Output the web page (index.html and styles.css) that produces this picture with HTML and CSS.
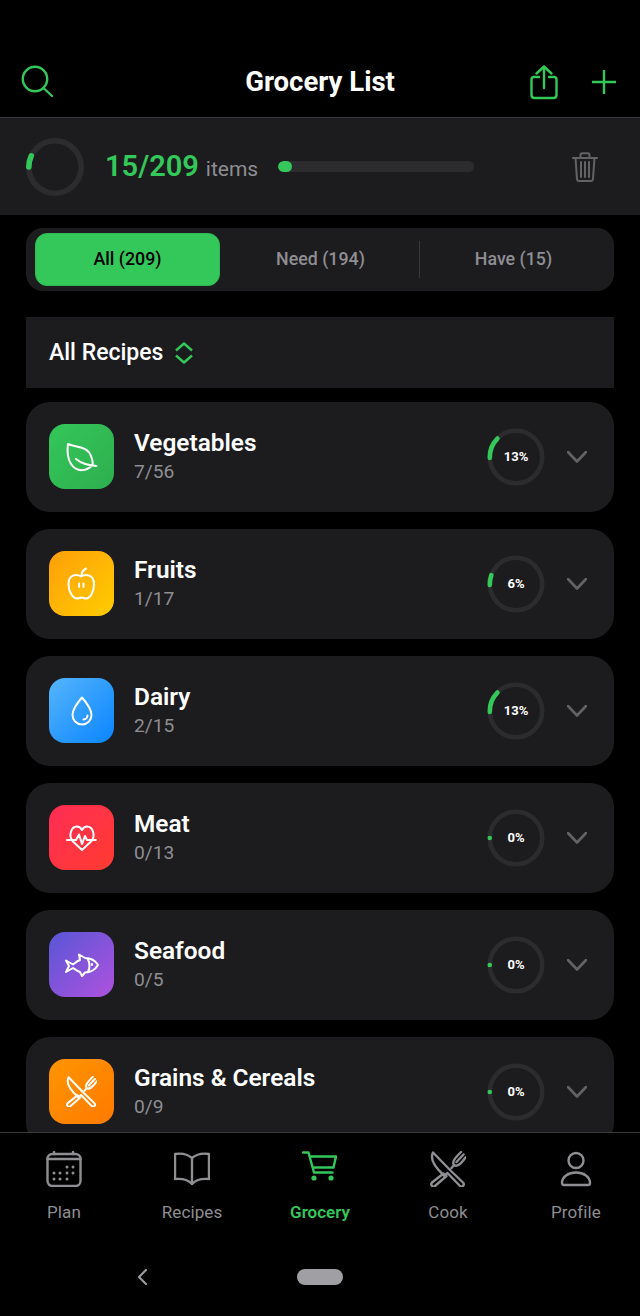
FILE: index.html
```html
<!DOCTYPE html>
<html lang="en">
<head>
<meta charset="utf-8">
<title>Grocery List</title>
<link rel="stylesheet" href="styles.css">
</head>
<body>
<div class="app">
  <header class="topbar">
    <button class="icon-btn search-btn" aria-label="Search">
      <svg class="ico-36 stroke-green" viewBox="0 0 36 36"><circle cx="15" cy="15" r="12.2"/><path d="M23.5 24 L32 32"/></svg>
    </button>
    <h1 class="title">Grocery List</h1>
    <div class="top-actions">
      <svg class="ico-36 stroke-green" viewBox="0 0 36 36"><path d="M11 13 H6 Q3.5 13 3.5 15.5 V31 Q3.5 34 6.5 34 H25.5 Q28.5 34 28.5 31 V15.5 Q28.5 13 26 13 H21"/><path d="M16 24 V2.5 M8.5 9.5 L16 2.5 L23.5 9.5"/></svg>
      <svg class="ico-24 stroke-green" viewBox="0 0 24 24"><path d="M12 .5 V23.5 M.5 12 H23.5"/></svg>
    </div>
  </header>

  <section class="summary">
    <svg class="ring-large" viewBox="0 0 58 58"><circle class="ring-track" cx="29" cy="29" r="26.2"/><circle class="ring-value" cx="29" cy="29" r="26.2" pathLength="100" stroke-dasharray="7 100" transform="rotate(180 29 29)"/></svg>
    <div class="count"><span class="count-num">15/209</span> <span class="count-label">items</span></div>
    <div class="bar"><div class="bar-fill" style="width:7%"></div></div>
    <svg class="trash" viewBox="0 0 26 30"><path d="M1 6 H25 M3.5 6 L5 27 Q5.2 29 7 29 H19 Q20.8 29 21 27 L22.5 6 M8.5 6 V3 Q8.5 1.2 10.3 1.2 H15.7 Q17.5 1.2 17.5 3 V6 M9 10 V25 M13 10 V25 M17 10 V25"/></svg>
  </section>

  <main class="content">
    <nav class="tabs">
      <div class="tab tab-active">All (209)</div>
      <div class="tab tab-divided">Need (194)</div>
      <div class="tab">Have (15)</div>
    </nav>

    <div class="filter">
      <span>All Recipes</span>
      <svg class="sort" viewBox="0 0 18 22"><path d="M1 8.5 L9 1.5 L17 8.5 M1 13.5 L9 20.5 L17 13.5"/></svg>
    </div>

    <ul class="cards">
      <li class="card">
        <div class="cat cat-green"><svg viewBox="0 0 65 65"><path d="M19 20 C28 24 38 22 42 32 C43.5 36 44 39 43.5 41 C38 47 28 49 22 40 C19 35 18 27 19 20 Z M27 35 C33 40 39 41 47.5 42"/></svg></div>
        <div class="info"><div class="name">Vegetables</div><div class="sub">7/56</div></div>
        <div class="ring"><svg viewBox="0 0 58 58"><circle class="ring-track" cx="29" cy="29" r="26.2"/><circle class="ring-value" cx="29" cy="29" r="26.2" pathLength="100" stroke-dasharray="13 100" transform="rotate(178 29 29)"/></svg><span>13%</span></div>
        <svg class="chev" viewBox="0 0 20 12"><path d="M1 1 L10 10.5 L19 1"/></svg>
      </li>
      <li class="card">
        <div class="cat cat-orange"><svg viewBox="0 0 65 65"><path d="M32 25.500 C27 22.500 19.500 23.500 19.500 33 C19.500 41 24 47.500 28 47.500 C30 47.500 31 46.500 32.500 46.500 C34 46.500 35 47.500 37 47.500 C41 47.500 45 41 45 33 C45 23.500 37 22.500 32 25.500 Z M32.500 25 C32.500 22 34 19 37 17.500 M30 32.500 V36 M34.500 32.500 V36"/></svg></div>
        <div class="info"><div class="name">Fruits</div><div class="sub">1/17</div></div>
        <div class="ring"><svg viewBox="0 0 58 58"><circle class="ring-track" cx="29" cy="29" r="26.2"/><circle class="ring-value" cx="29" cy="29" r="26.2" pathLength="100" stroke-dasharray="6 100" transform="rotate(178 29 29)"/></svg><span>6%</span></div>
        <svg class="chev" viewBox="0 0 20 12"><path d="M1 1 L10 10.5 L19 1"/></svg>
      </li>
      <li class="card">
        <div class="cat cat-blue"><svg viewBox="0 0 65 65"><path d="M33 19.500 C33 19.500 23.500 30.500 23.500 37 A9.500 9.500 0 0 0 42.500 37 C42.500 30.500 33 19.500 33 19.500 Z M38.500 37.500 A4.500 4.500 0 0 1 34.500 41.500"/></svg></div>
        <div class="info"><div class="name">Dairy</div><div class="sub">2/15</div></div>
        <div class="ring"><svg viewBox="0 0 58 58"><circle class="ring-track" cx="29" cy="29" r="26.2"/><circle class="ring-value" cx="29" cy="29" r="26.2" pathLength="100" stroke-dasharray="13 100" transform="rotate(178 29 29)"/></svg><span>13%</span></div>
        <svg class="chev" viewBox="0 0 20 12"><path d="M1 1 L10 10.5 L19 1"/></svg>
      </li>
      <li class="card">
        <div class="cat cat-red"><svg viewBox="0 0 65 65"><path d="M33 45 L24 36.500 C19 31 22 21.500 28 21.500 C30.500 21.500 32 23 33 25 C34 23 35.500 21.500 38 21.500 C44 21.500 47 31 42 36.500 Z M18 35 H27 L30 29.500 L33 39 L36 31 L38 35 H47"/></svg></div>
        <div class="info"><div class="name">Meat</div><div class="sub">0/13</div></div>
        <div class="ring"><svg viewBox="0 0 58 58"><circle class="ring-track" cx="29" cy="29" r="26.2"/><circle class="ring-value" cx="29" cy="29" r="26.2" pathLength="100" stroke-dasharray="0 100" transform="rotate(180 29 29)"/></svg><span>0%</span></div>
        <svg class="chev" viewBox="0 0 20 12"><path d="M1 1 L10 10.5 L19 1"/></svg>
      </li>
      <li class="card">
        <div class="cat cat-purple"><svg viewBox="0 0 65 65"><path d="M49 33 C46 28 42 26 36 26 L30 22.500 L31 28 C28 29 26 31 24 32.500 L17 28.500 L20 34 L17 40 L24 36 C27 38 29 39.500 31 40 L33 44 L36 40.500 C42 40.500 46 38 49 33 Z M38.500 26.500 C41 31 41 36 39 40 M43 32 V33"/></svg></div>
        <div class="info"><div class="name">Seafood</div><div class="sub">0/5</div></div>
        <div class="ring"><svg viewBox="0 0 58 58"><circle class="ring-track" cx="29" cy="29" r="26.2"/><circle class="ring-value" cx="29" cy="29" r="26.2" pathLength="100" stroke-dasharray="0 100" transform="rotate(180 29 29)"/></svg><span>0%</span></div>
        <svg class="chev" viewBox="0 0 20 12"><path d="M1 1 L10 10.5 L19 1"/></svg>
      </li>
      <li class="card">
        <div class="cat cat-amber"><svg class="cat-cross" viewBox="0 0 36 36"><path d="M3 1.500 L21 20 L33 31.500 C35 34 32.500 36.500 30 35 L17.500 22 L14 24.500 C8 19 -1 9 3 1.500 Z M13.500 22.500 L2 31.500 C0 34 3 37 5 35 L16.500 25 M21.500 17 L24 14 C22 11 24 8 31 1 M26.500 11 L33.500 3.500 M24 14 C27 16 30 14 36 6"/></svg></div>
        <div class="info"><div class="name">Grains &amp; Cereals</div><div class="sub">0/9</div></div>
        <div class="ring"><svg viewBox="0 0 58 58"><circle class="ring-track" cx="29" cy="29" r="26.2"/><circle class="ring-value" cx="29" cy="29" r="26.2" pathLength="100" stroke-dasharray="0 100" transform="rotate(180 29 29)"/></svg><span>0%</span></div>
        <svg class="chev" viewBox="0 0 20 12"><path d="M1 1 L10 10.5 L19 1"/></svg>
      </li>
    </ul>
  </main>

  <footer class="tabbar">
    <nav class="nav">
      <div class="nav-item">
        <svg class="ico-36 stroke-gray" viewBox="0 0 36 36"><rect x="1.500" y="3" width="33" height="32" rx="5"/><path d="M1.500 8 H34.500 M8 1 V3 M27 1 V3"/><g class="dots"><circle cx="21" cy="16" r="1.500"/><circle cx="27" cy="16" r="1.500"/><circle cx="8" cy="22" r="1.500"/><circle cx="14" cy="22" r="1.500"/><circle cx="21" cy="22" r="1.500"/><circle cx="27" cy="22" r="1.500"/><circle cx="8" cy="28" r="1.500"/><circle cx="14" cy="28" r="1.500"/><circle cx="21" cy="28" r="1.500"/></g></svg>
        <span>Plan</span>
      </div>
      <div class="nav-item">
        <svg class="ico-36 stroke-gray" viewBox="0 0 36 36"><path d="M18 7 C14 3.500 7 2 1 3 V28 C7 27.500 14 28 18 33 C22 28 29 27.500 35 28 V3 C29 2 22 3.500 18 7 Z M18 7 V33"/></svg>
        <span>Recipes</span>
      </div>
      <div class="nav-item nav-active">
        <svg class="ico-36 stroke-green" viewBox="0 0 36 36"><path d="M1 1.500 H6.500 L12 21.500 H30.500 M7.500 5.500 H34 L31.500 16.500 H10.500"/><circle class="wheel" cx="12" cy="27" r="2.600"/><circle class="wheel" cx="29" cy="27" r="2.600"/></svg>
        <span>Grocery</span>
      </div>
      <div class="nav-item">
        <svg class="ico-36 stroke-gray" viewBox="0 0 36 36"><path d="M3 1.500 L21 20 L33 31.500 C35 34 32.500 36.500 30 35 L17.500 22 L14 24.500 C8 19 -1 9 3 1.500 Z M13.500 22.500 L2 31.500 C0 34 3 37 5 35 L16.500 25 M21.500 17 L24 14 C22 11 24 8 31 1 M26.500 11 L33.500 3.500 M24 14 C27 16 30 14 36 6"/></svg>
        <span>Cook</span>
      </div>
      <div class="nav-item">
        <svg class="ico-36 stroke-gray" viewBox="0 0 36 36"><circle cx="18" cy="9.500" r="7.500"/><path d="M4 32 C4 26 10 21.500 18 21.500 C26 21.500 32 26 32 32 Q32 34 30 34 H6 Q4 34 4 32 Z"/></svg>
        <span>Profile</span>
      </div>
    </nav>
    <div class="system">
      <svg class="sys-back" viewBox="0 0 10 16"><path d="M9 1 L2 8 L9 15"/></svg>
      <div class="sys-pill"></div>
    </div>
  </footer>
</div>
</body>
</html>
```

FILE: styles.css
```css
* { box-sizing: border-box; }
html, body { margin: 0; padding: 0; background: #000; }
body { font-family: Roboto, "Liberation Sans", sans-serif; color: #fff; }

.app { width: 640px; height: 1316px; display: flex; flex-direction: column; overflow: hidden; }

svg { display: block; fill: none; stroke-linecap: round; stroke-linejoin: round; }
.ico-36 { width: 36px; height: 36px; stroke-width: 2.4; }
.ico-24 { width: 24px; height: 24px; stroke-width: 2.4; }
.stroke-green { stroke: #34c759; }
.stroke-gray { stroke: #8e8e93; }

.topbar { height: 118px; flex: none; padding: 46px 24px 0; display: grid; grid-template-columns: 1fr auto 1fr; align-items: center; border-bottom: 1px solid #38383a; }
.icon-btn { background: none; border: 0; padding: 0; width: 36px; height: 36px; }
.search-btn { margin-left: -4px; }
.title { margin: 0; font-size: 27.500px; font-weight: 700; line-height: 32px; }
.top-actions { justify-self: end; display: flex; align-items: center; gap: 28px; }

.summary { height: 97px; flex: none; background: #1c1c1e; display: flex; align-items: center; padding: 0 42px 0 26px; }
.ring-large { width: 58px; height: 58px; flex: none; }
.ring-track { stroke: #2c2c2e; stroke-width: 4.6; }
.ring-large .ring-track, .ring-large .ring-value { stroke-width: 5.6; }
.ring-value { stroke: #34c759; stroke-width: 4.6; }
.count { margin: 0 0 2px 21px; width: 173px; flex: none; white-space: nowrap; }
.count-num { font-size: 29px; font-weight: 600; color: #34c759; }
.count-label { font-size: 21px; color: #8e8e93; margin-left: 3px; }
.bar { width: 196px; height: 11px; flex: none; border-radius: 6px; background: #2c2c2e; overflow: hidden; }
.bar-fill { height: 100%; border-radius: 6px; background: #34c759; }
.trash { width: 26px; height: 30px; margin-left: auto; stroke: #636366; stroke-width: 2; }

.content { flex: 1; min-height: 0; overflow: hidden; padding: 13px 26px 0; }

.tabs { height: 63px; padding: 5px 4px 5px 5px; background: #1c1c1e; border-radius: 17px; display: grid; grid-template-columns: repeat(3, 1fr); align-items: stretch; }
.tab { position: relative; display: flex; align-items: center; justify-content: center; padding-bottom: 2px; font-size: 17.800px; font-weight: 500; color: #8e8e93; margin: 0 4px; border-radius: 12px; }
.tab-active { background: #34c759; color: #000; border: 1px solid #30b653; }
.tab-divided::after { content: ""; position: absolute; right: -7px; top: 8px; bottom: 8px; width: 1px; background: #38383a; }

.filter { margin-top: 26px; height: 71px; background: #1c1c1e; display: flex; align-items: center; gap: 12px; padding-left: 23px; font-size: 23px; font-weight: 500; }
.sort { width: 18px; height: 22px; stroke: #34c759; stroke-width: 2.4; stroke-linecap: butt; }

.cards { list-style: none; margin: 14px 0 0; padding: 0; display: flex; flex-direction: column; gap: 17px; }
.card { height: 110px; flex: none; background: #1c1c1e; border-radius: 24px; display: flex; align-items: center; padding: 0 27px 0 23px; }
.cat { width: 65px; height: 65px; flex: none; margin-bottom: 1px; border-radius: 16px; display: flex; align-items: center; justify-content: center; }
.cat svg { width: 65px; height: 65px; stroke: #fff; stroke-width: 2; }
.cat svg.cat-cross { width: 31px; height: 31px; stroke-width: 2.300; }
.cat-green { background: linear-gradient(135deg, #34c759, #2eae4f); }
.cat-orange { background: linear-gradient(135deg, #ff9f0a, #ffcc00); }
.cat-blue { background: linear-gradient(135deg, #55b5fb, #0a84ff); }
.cat-red { background: linear-gradient(135deg, #ff2d55, #ff3b30); }
.cat-purple { background: linear-gradient(135deg, #5856d6, #af52de); }
.cat-amber { background: linear-gradient(135deg, #ff9500, #ff7a00); }

.info { margin-left: 20px; flex: 1; min-width: 0; }
.name { font-size: 24.400px; font-weight: 600; line-height: 29px; }
.sub { margin-top: 1px; padding-bottom: 1px; font-size: 19.200px; line-height: 28px; color: #8e8e93; }

.ring { position: relative; width: 58px; height: 58px; flex: none; display: flex; align-items: center; justify-content: center; }
.ring svg { position: absolute; inset: 0; width: 58px; height: 58px; }
.ring span { position: relative; margin-bottom: 2px; font-size: 13px; font-weight: 700; }
.chev { width: 20px; height: 12px; flex: none; margin-left: 22px; stroke: #636366; stroke-width: 2.600; }

.tabbar { height: 184px; flex: none; background: #000; border-top: 1px solid #38383a; display: flex; flex-direction: column; }
.nav { display: grid; grid-template-columns: repeat(5, 1fr); padding-top: 18px; }
.nav-item { display: flex; flex-direction: column; align-items: center; gap: 15px; font-size: 17px; line-height: 20px; color: #8e8e93; letter-spacing: .1px; }
.nav-active { color: #34c759; font-weight: 600; letter-spacing: 0; }
.dots circle { fill: #8e8e93; stroke: none; }
.wheel { fill: #34c759; stroke: none; }

.system { position: relative; display: flex; align-items: center; justify-content: center; margin-top: 47px; height: 16px; }
.sys-back { position: absolute; left: 137px; top: 0; width: 10px; height: 16px; stroke: #9a9a9e; stroke-width: 2.200; }
.sys-pill { width: 46px; height: 16px; border-radius: 8px; background: #a0a0a4; }
```
